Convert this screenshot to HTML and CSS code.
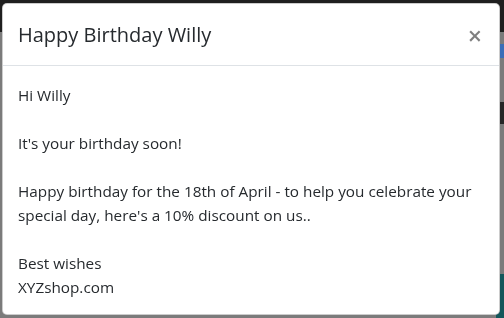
FILE: index.html
```html
<!DOCTYPE html>
<html>
<head>
  <meta charset="UTF-8">
  <title>Happy Birthday Willy</title>
  <link rel="stylesheet" href="styles.css">
</head>
<body>
  <div class="page">
    <div class="topbar"></div>
    <div class="content">
      <div class="link-strip"></div>
      <div class="dark-strip"></div>
      <div class="teal-block"></div>
    </div>
  </div>

  <div class="modal">
    <div class="modal-header">
      <h5 class="modal-title">Happy Birthday Willy</h5>
      <button class="close" type="button">&times;</button>
    </div>
    <div class="modal-body">
      Hi Willy<br><br>
      It's your birthday soon!<br><br>
      Happy birthday for the 18th of April - to help you celebrate your special day, here's a 10% discount on us..<br><br>
      Best wishes<br>
      XYZshop.com
    </div>
  </div>
</body>
</html>
```

FILE: styles.css
```css
body {
  margin: 0;
  height: 318px;
  overflow: hidden;
  background: #7b7b7b;
  font-family: "Open Sans", "Noto Sans", sans-serif;
}

.page {
  height: 100%;
  display: flex;
  flex-direction: column;
}

.topbar {
  height: 32px;
  background: #1f1f1f;
}

.content {
  flex: 1;
  display: flex;
  flex-direction: column;
  align-items: flex-end;
}

.link-strip {
  width: 6px;
  height: 14px;
  margin-top: 12px;
  background: #3b6db8;
}

.dark-strip {
  width: 6px;
  height: 22px;
  margin-top: 44px;
  background: #262626;
}

.teal-block {
  width: 8px;
  height: 44px;
  margin-top: auto;
  background: #14575b;
}

.modal {
  position: fixed;
  top: 3px;
  left: 2px;
  width: 498px;
  box-sizing: border-box;
  background: #fff;
  border: 1px solid rgba(0,0,0,0.2);
  border-radius: 5px;
  color: #262a2e;
}

.modal-header {
  display: flex;
  align-items: center;
  justify-content: space-between;
  padding: 16px 16px 15px 15px;
  border-bottom: 1px solid #dee2e6;
}

.modal-title {
  margin: 0;
  font-size: 20px;
  font-weight: 500;
  line-height: 30px;
}

.close {
  padding: 0;
  margin-right: 1px;
  border: none;
  background: none;
  font-family: inherit;
  font-size: 25px;
  font-weight: 600;
  line-height: 1;
  color: #000;
  opacity: 0.5;
  cursor: pointer;
}

.modal-body {
  padding: 17px 16px 15px 15px;
  font-size: 15.3px;
  line-height: 24px;
}
```
